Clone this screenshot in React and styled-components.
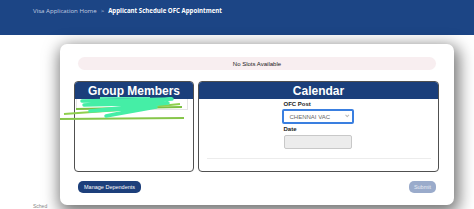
import React from "react";
import styled, { createGlobalStyle } from "styled-components";

const GlobalStyle = createGlobalStyle`
  html, body { margin: 0; padding: 0; background: #ffffff; }
  body { font-family: "Liberation Sans", Arial, sans-serif; overflow: hidden; }
  * { box-sizing: border-box; }
`;

const Page = styled.div`
  width: 474px;
  height: 209px;
  overflow: hidden;
  display: flex;
  flex-direction: column;
  background: #ffffff;
`;

const Header = styled.header`
  height: 35px;
  flex: none;
  background: #1c4585;
  display: flex;
  align-items: flex-start;
  gap: 4px;
  padding: 7px 0 0 33px;
  font-family: "Open Sans", "Liberation Sans", sans-serif;
  font-size: 6.1px;
  line-height: 8px;
`;

const Crumb = styled.span`
  color: ${(p) => (p.$current ? "#ffffff" : "#c3cee2")};
  font-weight: ${(p) => (p.$current ? 700 : 400)};
`;

const Stage = styled.div`
  flex: none;
  display: flex;
  padding: 9px 20px 0 60px;
`;

const Modal = styled.div`
  position: relative;
  width: 394px;
  height: 161px;
  background: #ffffff;
  border-radius: 7px;
  box-shadow: 2px 5px 16px 3px rgba(0, 0, 0, 0.55);
  padding: 13px 15px 0 14px;
  display: flex;
  flex-direction: column;
`;

const Notice = styled.div`
  margin: 0 3px 0 4px;
  height: 13px;
  border-radius: 7px;
  background: #f8eef0;
  color: #222;
  font-size: 6px;
  display: flex;
  align-items: center;
  justify-content: center;
`;

const Panels = styled.div`
  display: flex;
  gap: 4px;
  margin-top: 11px;
  height: 91px;
`;

const Panel = styled.section`
  width: ${(p) => p.$w}px;
  flex: none;
  border: 1px solid #505050;
  border-radius: 4px;
  overflow: hidden;
  display: flex;
  flex-direction: column;
  background: #fff;
`;

const PanelHeader = styled.div`
  height: 17px;
  flex: none;
  background: #1b3f7b;
  color: #ffffff;
  font-weight: 700;
  font-size: 12px;
  display: flex;
  align-items: center;
  justify-content: center;
`;

const MemberRow = styled.div`
  margin: 0 5px 0 1px;
  height: 11px;
  border: 1px solid #e4e4e4;
  border-top: none;
`;

const CalBody = styled.div`
  flex: 1;
  display: flex;
  flex-direction: column;
  align-items: center;
  padding-top: 2px;
`;

const Form = styled.div`
  width: 68px;
  margin-left: -2px;
  display: flex;
  flex-direction: column;
`;

const Label = styled.label`
  font-size: 6px;
  font-weight: 700;
  line-height: 7px;
  color: #222;
`;

const Select = styled.div`
  margin: 1px -2px 2px -2px;
  height: 15px;
  border: 2px solid #3a7fe0;
  border-radius: 2px;
  background: #fff;
  display: flex;
  align-items: center;
  justify-content: space-between;
  padding: 0 3px 0 6px;
  font-size: 6px;
  color: #666;
`;

const Chevron = styled.span`
  width: 2.5px;
  height: 2.5px;
  border-right: 1px solid #bbb;
  border-bottom: 1px solid #bbb;
  transform: rotate(45deg) translate(-1px, -1px);
`;

const DateInput = styled.div`
  margin-top: 2px;
  height: 14px;
  background: #ececec;
  border: 1px solid #c8c8c8;
  border-radius: 2px;
`;

const Rule = styled.div`
  align-self: stretch;
  margin: 9px 7px 0 8px;
  height: 1px;
  background: #ececec;
`;

const Footer = styled.div`
  display: flex;
  justify-content: space-between;
  margin: 9px 3px 0 4px;
`;

const Button = styled.button`
  height: 12px;
  border: none;
  border-radius: 5px;
  padding: 0 ${(p) => (p.$muted ? 5 : 6)}px;
  background: ${(p) => (p.$muted ? "#9aabcb" : "#1d3f7b")};
  color: ${(p) => (p.$muted ? "#e6ebf4" : "#ffffff")};
  font-family: "Liberation Sans", Arial, sans-serif;
  font-size: 5.5px;
  display: flex;
  align-items: center;
`;

const Scribble = styled.svg`
  position: absolute;
  left: 0;
  top: 53px;
`;

const Below = styled.div`
  padding-left: 33px;
  margin-top: -2px;
  font-size: 5px;
  color: #888;
  line-height: 6px;
`;

export default function App() {
  return (
    <Page>
      <GlobalStyle />
      <Header>
        <Crumb>Visa Application Home</Crumb>
        <Crumb>&gt;</Crumb>
        <Crumb $current>Applicant Schedule OFC Appointment</Crumb>
      </Header>
      <Stage>
        <Modal>
          <Notice>No Slots Available</Notice>
          <Panels>
            <Panel $w={120}>
              <PanelHeader>Group Members</PanelHeader>
              <MemberRow />
            </Panel>
            <Panel $w={241}>
              <PanelHeader>Calendar</PanelHeader>
              <CalBody>
                <Form>
                  <Label>OFC Post</Label>
                  <Select>
                    <span>CHENNAI VAC</span>
                    <Chevron />
                  </Select>
                  <Label>Date</Label>
                  <DateInput />
                </Form>
                <Rule />
              </CalBody>
            </Panel>
          </Panels>
          <Footer>
            <Button>Manage Dependents</Button>
            <Button $muted>Submit</Button>
          </Footer>
          <Scribble width="140" height="26" viewBox="0 0 140 26">
            <path d="M0 22 L124 21" stroke="#86c64a" strokeWidth="2.2" fill="none" />
            <path d="M16 12 L122 10" stroke="#7cc043" strokeWidth="2" fill="none" />
            <path d="M4 17 L60 13 L120 7" stroke="#8fd04e" strokeWidth="2" fill="none" />
            <path
              d="M22 4 L112 2 L24 8 L108 6 L30 14 L96 10 L46 19 L80 12"
              stroke="#45eea6"
              strokeWidth="3.5"
              strokeLinejoin="round"
              strokeLinecap="round"
              fill="none"
            />
            <path d="M40 1 L90 0" stroke="#5cf0b4" strokeWidth="2" fill="none" />
          </Scribble>
        </Modal>
      </Stage>
      <Below>Sched</Below>
    </Page>
  );
}
